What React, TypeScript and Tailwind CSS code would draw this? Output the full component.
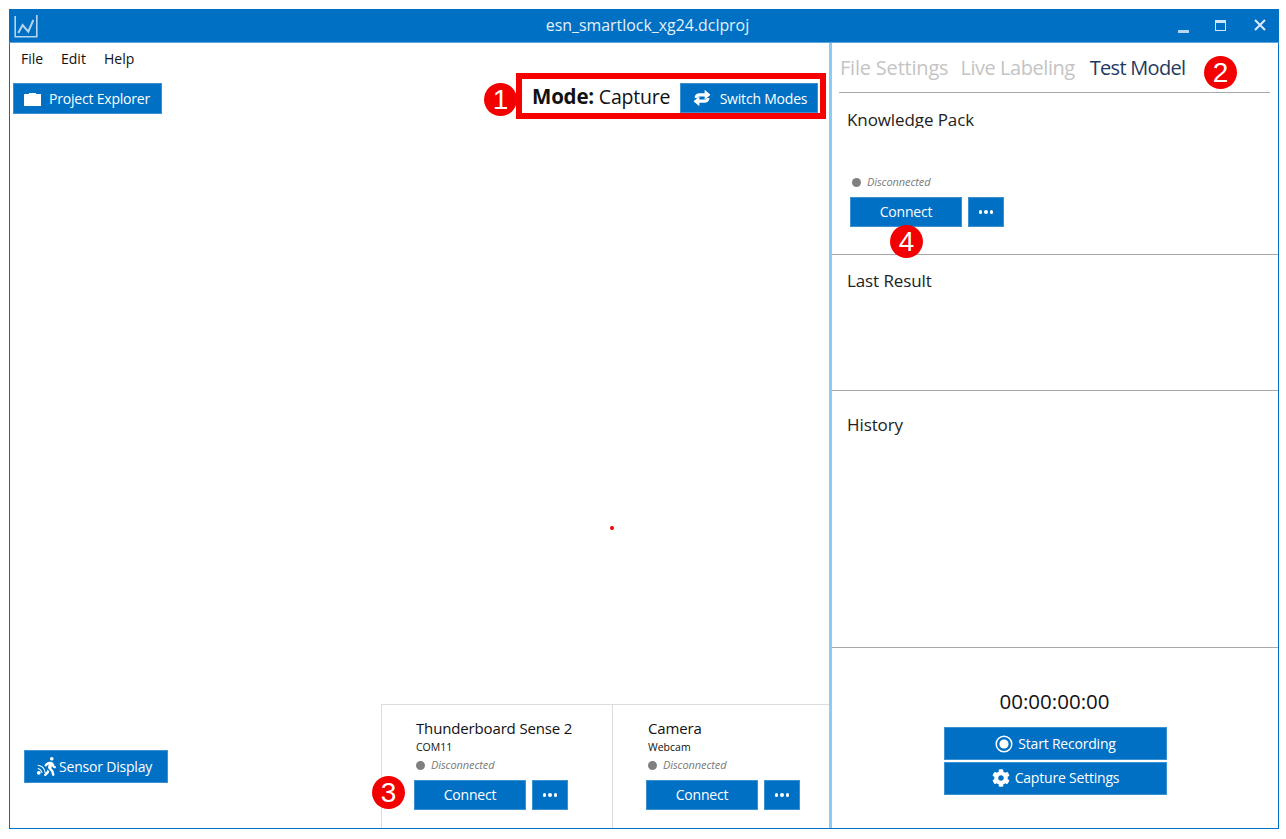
import { FaCog, FaWalking } from "react-icons/fa";

const font = "font-['Open_Sans',sans-serif]";

function Badge({ n, className }: { n: number; className: string }) {
  return (
    <div
      className={`absolute w-[33px] h-[33px] rounded-full bg-[#f30000] text-white flex items-center justify-center text-[28px] leading-none font-['Liberation_Sans',sans-serif] ${className}`}
    >
      {n}
    </div>
  );
}

function Btn({ children, className }: { children: React.ReactNode; className: string }) {
  return (
    <div
      className={`flex items-center justify-center bg-[#0070c5] text-white text-[14px] font-medium tracking-[-0.2px] border border-[#3b92d3] whitespace-nowrap ${className}`}
    >
      {children}
    </div>
  );
}

function Status() {
  return (
    <div className="flex items-center h-[14px] text-[11px] italic text-[#7a7a7a] tracking-[-0.1px]">
      <span className="w-[9px] h-[9px] rounded-full bg-[#808080] mr-[6px]" />
      Disconnected
    </div>
  );
}

function ConnectRow() {
  return (
    <div className="flex gap-[6px]">
      <Btn className="w-[112px] h-[30px] pb-[2px]">Connect</Btn>
      <Btn className="w-[36px] h-[30px]">
        <span className="flex gap-[2px]">
          <i className="w-[3.5px] h-[3.5px] bg-white rounded-full" />
          <i className="w-[3.5px] h-[3.5px] bg-white rounded-full" />
          <i className="w-[3.5px] h-[3.5px] bg-white rounded-full" />
        </span>
      </Btn>
    </div>
  );
}

function DeviceCard({ name, port }: { name: string; port: string }) {
  return (
    <div className="h-full flex flex-col">
      <div className="pl-[2px] text-[15px] leading-[20px] mt-[13px] text-[#111] tracking-[-0.15px] whitespace-nowrap">{name}</div>
      <div className="pl-[2px] text-[10.5px] leading-[14px] mt-[2px] text-[#111]">{port}</div>
      <div className="pl-[2px] mt-[4px]">
        <Status />
      </div>
      <div className="mt-[8px]">
        <ConnectRow />
      </div>
    </div>
  );
}

export default function App() {
  return (
    <div className={`${font} w-[1286px] h-[839px] bg-white pl-[9px] pt-[9px] relative overflow-hidden`}>
      <div className="w-[1270px] h-[820px] border-x border-b border-[#0070c5] flex flex-col">
        {/* title bar */}
        <div className="h-[34px] shrink-0 bg-[#0070c5] border-b border-[#5aa5de] -mx-px flex items-center relative text-white">
          <svg width="24" height="24" viewBox="0 0 24 24" fill="none" stroke="#b7d6ee" className="ml-[5px]">
            <path d="M1.2 2v20.8h21.6V1" strokeWidth="1.6" />
            <path d="M4.3 19 8.6 11l5.7 6.6L19.3 6" strokeWidth="2" />
          </svg>
          <div className="absolute inset-x-0 pl-[7px] text-center text-[15.9px] text-[#e4f0fa]">esn_smartlock_xg24.dclproj</div>
          <div className="ml-auto flex items-center mr-[13px]">
            <svg width="11" height="11" viewBox="0 0 11 11" className="mt-[3px] mr-[26px]">
              <rect x="0" y="8" width="11" height="3" fill="#b6d5ee" />
            </svg>
            <svg width="11" height="11" viewBox="0 0 11 11" fill="none" stroke="#cfe4f5" className="mb-[1px] mr-[28px]">
              <rect x="0.5" y="0.5" width="10" height="10" />
              <rect x="0" y="0" width="11" height="3" fill="#cfe4f5" stroke="none" />
            </svg>
            <svg width="12" height="12" viewBox="0 0 12 12" stroke="#dcebf7" strokeWidth="2" className="mb-[1px]">
              <path d="M1 1l10 10M11 1 1 11" />
            </svg>
          </div>
        </div>

        <div className="flex-1 flex min-h-0">
          {/* left pane */}
          <div className="w-[819px] shrink-0 flex flex-col relative">
            <div className="flex pl-[11px] pt-[6px] text-[14px] leading-[20px] text-[#111]">
              <span className="w-[40px]">File</span>
              <span className="w-[43px]">Edit</span>
              <span>Help</span>
            </div>
            <div className="flex justify-between items-start pl-[3px] pr-[3px]">
              <Btn className="w-[149px] h-[31px] mt-[14px] gap-[8px] justify-start pl-[10px]">
                <svg width="17" height="14" viewBox="0 0 17 14" fill="white">
                  <path d="M5 2V1h7v1h5v12H0V2z" />
                </svg>
                Project Explorer
              </Btn>
              <div className="w-[310px] h-[46px] mt-[4px] border-[6px] border-[#f60000] flex items-center pl-[10px] pr-[2px] justify-between">
                <span className="text-[19.5px] text-[#111] tracking-[-0.2px] whitespace-nowrap">
                  <b className="font-bold text-[20.5px]">Mode:</b> Capture
                </span>
                <Btn className="w-[138px] h-[30px] gap-[9px] pl-[2px] self-end">
                  <svg width="18" height="18" viewBox="0 0 17 17" fill="white">
                    <path d="M1.5 8.5C1.5 5.5 3.5 4 6 4h5V0.6l5.5 4.9L11 10.2V7H6.5C5 7 4.4 7.6 4 8.5z" />
                    <path d="M15.5 8.5c0 3-2 4.5-4.5 4.5H6v3.4L0.5 11.5 6 6.8V10h4.5c1.5 0 2.1-.6 2.5-1.5z" />
                  </svg>
                  Switch Modes
                </Btn>
              </div>
            </div>

            <div className="mt-auto flex items-end justify-between h-[124px]">
              <Btn className="w-[144px] h-[33px] ml-[14px] mb-[45px] justify-start pl-[11px] text-[13.7px]">
                <svg width="11" height="13" viewBox="0 0 9 12" fill="none" stroke="white" strokeWidth="1" className="mt-[4px] -mr-[4px]">
                  <circle cx="2" cy="10" r="1.8" fill="white" stroke="none" />
                  <path d="M1 6q3 .5 4 4M1 3q6 .5 7 7" />
                </svg>
                <FaWalking className="w-[14px] h-[19px] mr-[2px]" />
                Sensor Display
              </Btn>
              <div className="w-[448px] h-[124px] border-l border-t border-[#dcdcdc] flex">
                <div className="w-[231px] border-r border-[#dcdcdc] pl-[32px]">
                  <DeviceCard name="Thunderboard Sense 2" port="COM11" />
                </div>
                <div className="flex-1 pl-[33px]">
                  <DeviceCard name="Camera" port="Webcam" />
                </div>
              </div>
            </div>
            <div className="absolute w-[4px] h-[4px] rounded-full bg-[#f00000] left-[600px] top-[483px]" />
          </div>

          {/* right pane */}
          <div className="flex-1 border-l-[3px] border-[#8ccbf5] flex flex-col text-[#222]">
            <div className="h-[50px] shrink-0 ml-[7px] mr-[8px] border-b border-[#a8a8a8] flex items-end pl-[1px] pb-[10px] text-[20px] leading-[28px] tracking-[-0.2px] whitespace-nowrap">
              <span className="text-[#c4c4c4] mr-[12px]">File Settings</span>
              <span className="text-[#c4c4c4] tracking-[-0.45px] mr-[15px]">Live Labeling</span>
              <span className="text-[#1f3a5f] tracking-[-0.7px]">Test Model</span>
            </div>
            <div className="h-[162px] shrink-0 border-b border-[#a8a8a8] pl-[15px] flex flex-col">
              <div className="text-[17px] leading-[20px] mt-[17px] h-[18px] overflow-hidden tracking-[-0.1px]">Knowledge Pack</div>
              <div className="mt-[47px] pl-[5px]">
                <Status />
              </div>
              <div className="mt-[8px] pl-[3px]">
                <ConnectRow />
              </div>
            </div>
            <div className="h-[136px] shrink-0 border-b border-[#a8a8a8] pl-[15px] pt-[16px] text-[17px] leading-[20px] tracking-[-0.1px]">
              Last Result
            </div>
            <div className="h-[257px] shrink-0 border-b border-[#a8a8a8] pl-[15px] pt-[24px] text-[17px] leading-[20px] tracking-[-0.1px]">
              History
            </div>
            <div className="flex-1 flex flex-col items-center pt-[40px] pl-[1px]">
              <div className="text-[20.5px] leading-[26px] text-[#111] mr-[2px]">00:00:00:00</div>
              <Btn className="w-[223px] h-[33px] mt-[13px] gap-[5px]">
                <svg width="18" height="18" viewBox="0 0 18 18" fill="none">
                  <circle cx="9" cy="9" r="7.8" stroke="white" strokeWidth="1.5" />
                  <circle cx="9" cy="9" r="4.6" fill="white" />
                </svg>
                Start Recording
              </Btn>
              <Btn className="w-[223px] h-[33px] mt-[2px] gap-[5px] pb-[2px]">
                <FaCog className="w-[18px] h-[18px]" />
                Capture Settings
              </Btn>
            </div>
          </div>
        </div>
      </div>

      <Badge n={1} className="left-[484px] top-[83px]" />
      <Badge n={2} className="left-[1204px] top-[56px]" />
      <Badge n={3} className="left-[372px] top-[776px]" />
      <Badge n={4} className="left-[890px] top-[225px]" />
    </div>
  );
}
